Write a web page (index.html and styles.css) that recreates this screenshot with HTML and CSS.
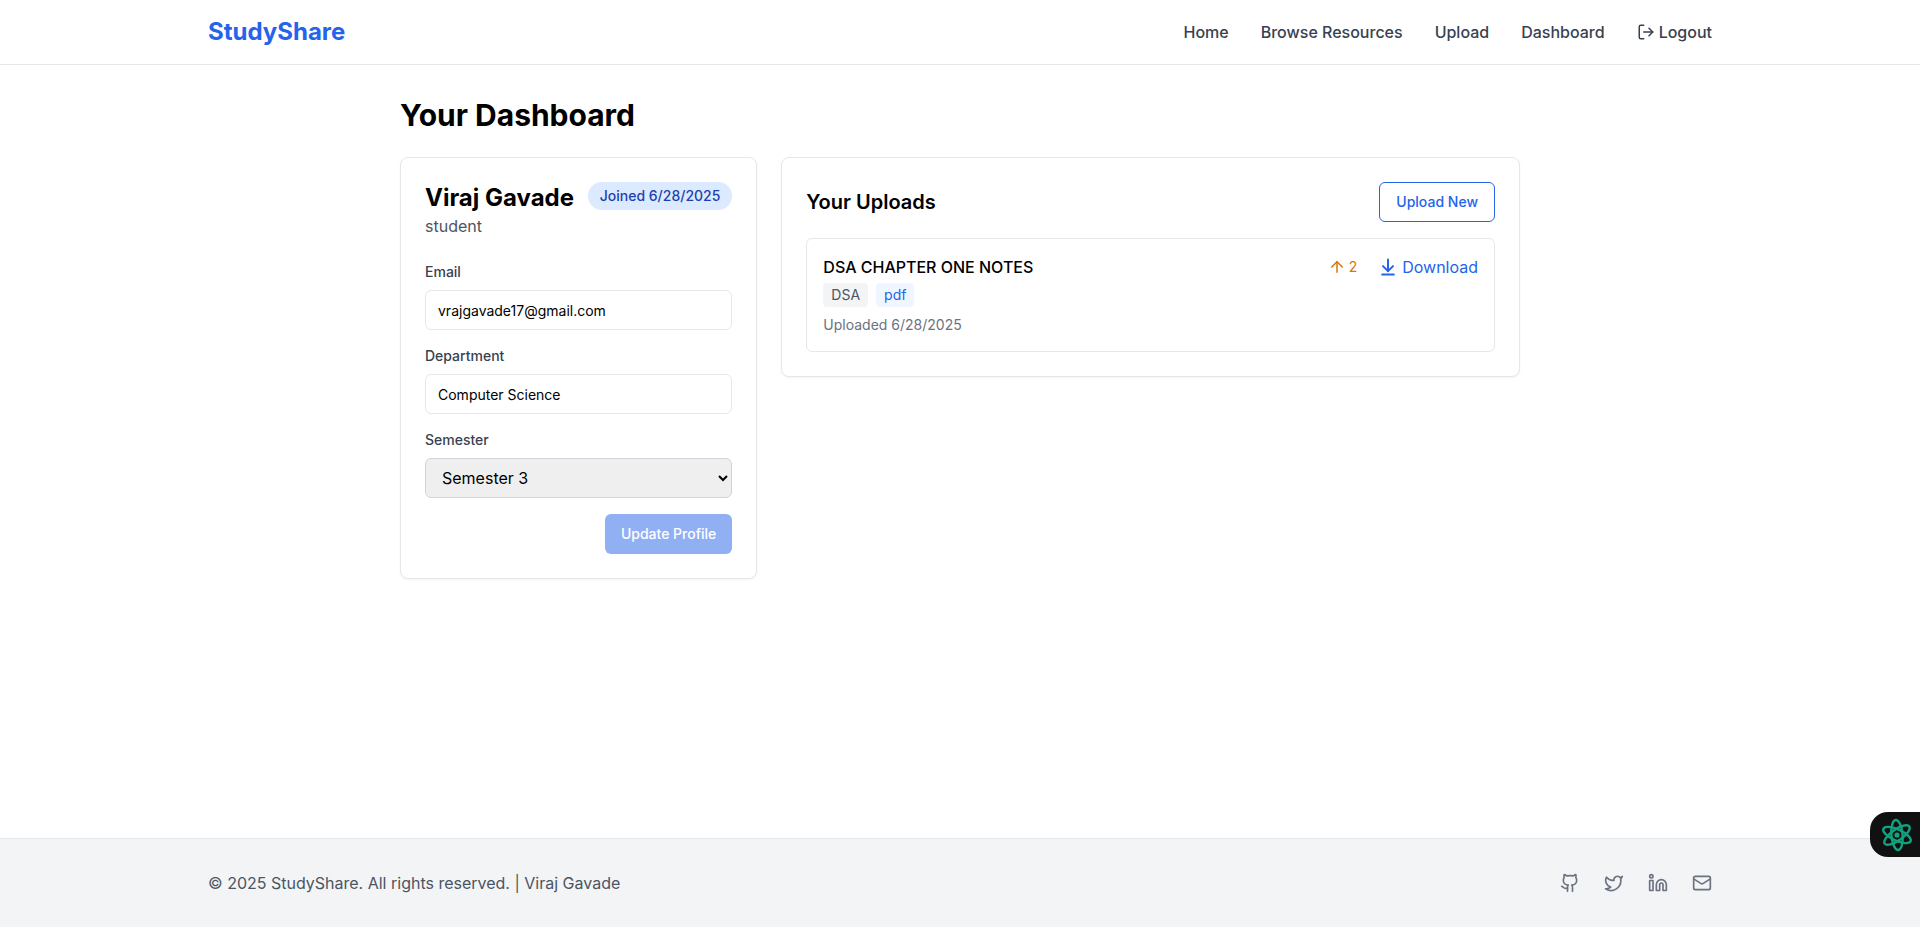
FILE: index.html
```html
<!DOCTYPE html>
<html lang="en">
<head>
<meta charset="utf-8">
<title>StudyShare</title>
<link rel="stylesheet" href="styles.css">
</head>
<body>
<div class="page">
  <header class="navbar">
    <div class="wide-container nav-inner">
      <a class="logo" href="#">StudyShare</a>
      <nav class="nav-links">
        <a href="#">Home</a>
        <a href="#">Browse Resources</a>
        <a href="#">Upload</a>
        <a href="#">Dashboard</a>
        <a class="logout" href="#">
          <svg class="icon-18" viewBox="0 0 24 24"><path d="M9 21H5a2 2 0 0 1-2-2V5a2 2 0 0 1 2-2h4"/><polyline points="16 17 21 12 16 7"/><line x1="21" y1="12" x2="9" y2="12"/></svg>
          <span>Logout</span>
        </a>
      </nav>
    </div>
  </header>

  <main class="main">
    <h1 class="page-title">Your Dashboard</h1>
    <div class="grid">
      <section class="card profile">
        <div class="profile-head">
          <h2 class="name">Viraj Gavade</h2>
          <span class="badge">Joined 6/28/2025</span>
        </div>
        <p class="role">student</p>
        <form class="form">
          <div class="field">
            <label class="label" for="email">Email</label>
            <input class="input" id="email" type="text" value="vrajgavade17@gmail.com">
          </div>
          <div class="field">
            <label class="label" for="dept">Department</label>
            <input class="input" id="dept" type="text" value="Computer Science">
          </div>
          <div class="field">
            <label class="label" for="sem">Semester</label>
            <select class="select" id="sem">
              <option>Semester 1</option>
              <option>Semester 2</option>
              <option selected>Semester 3</option>
              <option>Semester 4</option>
            </select>
          </div>
          <div class="form-actions">
            <button class="btn-primary" type="button" disabled>Update Profile</button>
          </div>
        </form>
      </section>

      <section class="card uploads">
        <div class="uploads-head">
          <h2 class="uploads-title">Your Uploads</h2>
          <a class="btn-outline" href="#">Upload New</a>
        </div>
        <article class="resource">
          <div class="resource-info">
            <h3 class="resource-title">DSA CHAPTER ONE NOTES</h3>
            <div class="tags">
              <span class="tag tag-gray">DSA</span>
              <span class="tag tag-blue">pdf</span>
            </div>
            <p class="uploaded">Uploaded 6/28/2025</p>
          </div>
          <div class="resource-actions">
            <span class="votes">
              <svg class="icon-18" viewBox="0 0 24 24"><path d="m5 12 7-7 7 7"/><path d="M12 19V5"/></svg>
              <span>2</span>
            </span>
            <a class="download" href="#">
              <svg class="icon-20 icon-heavy" viewBox="0 0 24 24"><path d="M12 17V3"/><path d="m6 11 6 6 6-6"/><path d="M19 21H5"/></svg>
              <span>Download</span>
            </a>
          </div>
        </article>
      </section>
    </div>
  </main>

  <footer class="footer">
    <div class="wide-container footer-inner">
      <p class="copyright">© 2025 StudyShare. All rights reserved. | Viraj Gavade</p>
      <div class="socials">
        <a href="#"><svg class="icon-20" viewBox="0 0 24 24"><path d="M15 22v-4a4.8 4.8 0 0 0-1-3.5c3 0 6-2 6-5.5.08-1.25-.27-2.48-1-3.5.28-1.15.28-2.35 0-3.5 0 0-1 0-3 1.5-2.64-.5-5.36-.5-8 0C6 2 5 2 5 2c-.3 1.15-.3 2.35 0 3.5A5.403 5.403 0 0 0 4 9c0 3.5 3 5.5 6 5.5-.39.49-.68 1.05-.85 1.65-.17.6-.22 1.23-.15 1.85v4"/><path d="M9 18c-4.51 2-5-2-7-2"/></svg></a>
        <a href="#"><svg class="icon-20" viewBox="0 0 24 24"><path d="M22 4s-.7 2.1-2 3.4c1.6 10-9.4 17.3-18 11.6 2.2.1 4.4-.6 6-2C3 15.5.5 9.6 3 5c2.2 2.6 5.6 4.1 9 4-.9-4.2 4-6.6 7-3.8 1.1 0 3-1.2 3-1.2z"/></svg></a>
        <a href="#"><svg class="icon-20" viewBox="0 0 24 24"><path d="M16 8a6 6 0 0 1 6 6v7h-4v-7a2 2 0 0 0-2-2 2 2 0 0 0-2 2v7h-4v-7a6 6 0 0 1 6-6z"/><rect x="2" y="9" width="4" height="12"/><circle cx="4" cy="4" r="2"/></svg></a>
        <a href="#"><svg class="icon-20" viewBox="0 0 24 24"><rect x="2" y="4" width="20" height="16" rx="2"/><path d="m22 7-8.97 5.7a1.94 1.94 0 0 1-2.06 0L2 7"/></svg></a>
      </div>
    </div>
  </footer>
</div>

<button class="assistant" type="button" aria-label="Assistant">
  <svg class="assistant-icon" viewBox="0 0 36 36">
    <ellipse cx="18" cy="18" rx="15" ry="5.6" transform="rotate(85 18 18)"/>
    <ellipse cx="18" cy="18" rx="15" ry="5.6" transform="rotate(25 18 18)"/>
    <ellipse cx="18" cy="18" rx="15" ry="5.6" transform="rotate(145 18 18)"/>
    <circle class="assistant-dot" cx="18" cy="18" r="2.6"/>
  </svg>
</button>
</body>
</html>
```

FILE: styles.css
```css
* { box-sizing: border-box; }
html, body { margin: 0; padding: 0; }
body {
  font-family: Inter, "Liberation Sans", sans-serif;
  font-size: 16px;
  line-height: 24px;
  color: #000;
  background: #fff;
}
a { color: inherit; text-decoration: none; }
h1, h2, h3, p { margin: 0; }
svg { display: block; fill: none; stroke: currentColor; stroke-width: 2; stroke-linecap: round; stroke-linejoin: round; flex: none; }
.icon-18 { width: 18px; height: 18px; }
.icon-20 { width: 20px; height: 20px; }
.icon-heavy { stroke-width: 2.4; }

.page { min-height: 927px; display: flex; flex-direction: column; }
.wide-container { width: 100%; max-width: 1536px; margin: 0 auto; padding: 0 16px; }

.navbar { background: #fff; border-bottom: 1px solid #e5e7eb; }
.nav-inner { height: 64px; display: flex; align-items: center; justify-content: space-between; }
.logo { font-size: 24px; line-height: 32px; font-weight: 700; color: #2563eb; }
.nav-links { display: flex; align-items: center; gap: 32px; font-weight: 500; color: #374151; }
.logout { display: flex; align-items: center; gap: 4px; }

.main { flex: 1; width: 100%; max-width: 1152px; margin: 0 auto; padding: 32px 16px; }
.page-title { font-size: 30px; line-height: 36px; font-weight: 700; margin-bottom: 24px; }
.grid { display: grid; grid-template-columns: repeat(3, minmax(0, 1fr)); gap: 24px; align-items: start; }

.card { background: #fff; border: 1px solid #e5e7eb; border-radius: 8px; padding: 24px; box-shadow: 0 1px 2px rgba(0, 0, 0, 0.05); }
.uploads { grid-column: span 2; }

.profile-head { display: flex; align-items: flex-start; justify-content: space-between; }
.name { font-size: 24px; line-height: 32px; font-weight: 700; }
.badge { background: #dbeafe; color: #1e40af; font-size: 14px; line-height: 20px; font-weight: 500; padding: 4px 12px; border-radius: 9999px; white-space: nowrap; }
.role { color: #4b5563; }

.form { margin-top: 24px; display: flex; flex-direction: column; gap: 16px; }
.label { display: block; font-size: 14px; line-height: 20px; font-weight: 500; color: #374151; margin-bottom: 8px; }
.input { display: block; width: 100%; height: 40px; padding: 8px 12px; border: 1px solid #e5e7eb; border-radius: 6px; background: #fff; font: 14px/20px Inter, "Liberation Sans", sans-serif; color: #000; }
.select { display: block; width: 100%; height: 40px; padding: 8px 12px; border: 1px solid #d1d5db; border-radius: 6px; background-color: #efefef; font: 16px/24px Inter, "Liberation Sans", sans-serif; color: #000; }
.form-actions { display: flex; justify-content: flex-end; }
.btn-primary { height: 40px; padding: 0 16px; border: 0; border-radius: 6px; background: #2563eb; opacity: 0.5; color: #fff; font: 500 14px/20px Inter, "Liberation Sans", sans-serif; }

.uploads-head { display: flex; align-items: center; justify-content: space-between; margin-bottom: 16px; }
.uploads-title { font-size: 20px; line-height: 28px; font-weight: 600; }
.btn-outline { display: flex; align-items: center; height: 40px; padding: 0 16px; border: 1px solid #2563eb; border-radius: 6px; color: #2563eb; font-size: 14px; line-height: 20px; font-weight: 500; }

.resource { display: flex; justify-content: space-between; align-items: flex-start; border: 1px solid #e5e7eb; border-radius: 6px; padding: 16px; }
.resource-title { font-size: 16px; line-height: 24px; font-weight: 500; }
.tags { display: flex; gap: 8px; margin-top: 4px; }
.tag { font-size: 14px; line-height: 20px; padding: 2px 8px; border-radius: 4px; }
.tag-gray { background: #f3f4f6; color: #4b5563; }
.tag-blue { background: #eff6ff; color: #2563eb; }
.uploaded { font-size: 14px; line-height: 20px; color: #6b7280; margin-top: 8px; }
.resource-actions { display: flex; align-items: center; gap: 21px; }
.votes { display: flex; align-items: center; gap: 3px; font-size: 14px; line-height: 20px; color: #d97706; }
.download { display: flex; align-items: center; gap: 4px; color: #2563eb; }

.footer { background: #f3f4f6; border-top: 1px solid #e5e7eb; padding: 32px 0; }
.footer-inner { display: flex; align-items: center; justify-content: space-between; }
.copyright { color: #4b5563; }
.socials { display: flex; gap: 24px; color: #6b7280; }

.assistant { position: fixed; right: 0; top: 812px; width: 50px; height: 45px; padding: 0 0 0 9px; border: 0; background: #111; border-radius: 18px 0 0 18px; display: flex; align-items: center; }
.assistant-icon { width: 36px; height: 36px; color: #10a37f; stroke-width: 2.4; }
.assistant-dot { fill: currentColor; stroke: none; }
```
